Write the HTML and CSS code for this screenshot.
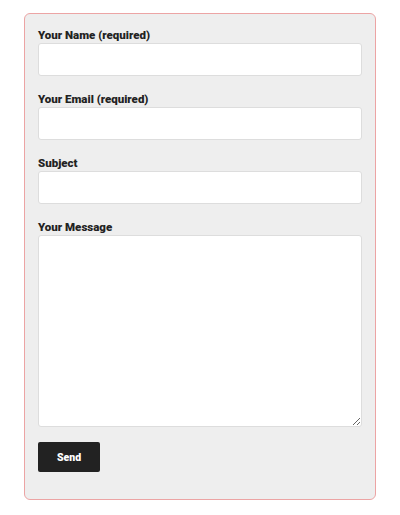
FILE: index.html
```html
<!DOCTYPE html>
<html lang="en">
<head>
	<meta charset="utf-8">
	<meta name="viewport" content="width=device-width, initial-scale=1">
	<title>Contact</title>
	<link rel="stylesheet" href="styles.css">
</head>
<body>
	<form class="contact-form" action="#">
		<div class="field">
			<label for="your-name">Your Name (required)</label>
			<input type="text" id="your-name">
		</div>
		<div class="field">
			<label for="your-email">Your Email (required)</label>
			<input type="email" id="your-email">
		</div>
		<div class="field">
			<label for="your-subject">Subject</label>
			<input type="text" id="your-subject">
		</div>
		<div class="field last">
			<label for="your-message">Your Message</label>
			<textarea id="your-message"></textarea>
		</div>
		<button type="submit" class="send">Send</button>
	</form>
</body>
</html>
```

FILE: styles.css
```css
*{
	box-sizing: border-box;
}
body{
	margin: 0;
	background-color: #fff;
	font-family: Roboto, "Liberation Sans", sans-serif;
	color: #222;
}
.contact-form{
	width: 352px;
	margin: 13px 0 0 24px;
	padding: 12px 13px 27px 13px;
	background-color: #eee;
	border: 1px solid #eca4a4;
	border-radius: 6px;
}
.field{
	margin-bottom: 14px;
}
.field.last{
	margin-bottom: 15px;
}
label{
	display: block;
	font-size: 11.5px;
	font-weight: 900;
	line-height: 17px;
	padding-top: 1px;
	margin-bottom: -1px;
	color: #222;
}
input,
textarea{
	display: block;
	width: 100%;
	height: 33px;
	margin: 0;
	padding: 6px 8px;
	background-color: #fff;
	border: 1px solid #ddd;
	border-radius: 3px;
	font-family: inherit;
	font-size: 14px;
	color: #333;
}
textarea{
	height: 192px;
}
.send{
	display: block;
	width: 62px;
	height: 30px;
	padding: 0;
	background-color: #222;
	color: #fff;
	border: none;
	border-radius: 2px;
	font-family: inherit;
	font-size: 10.5px;
	font-weight: 900;
}
```
